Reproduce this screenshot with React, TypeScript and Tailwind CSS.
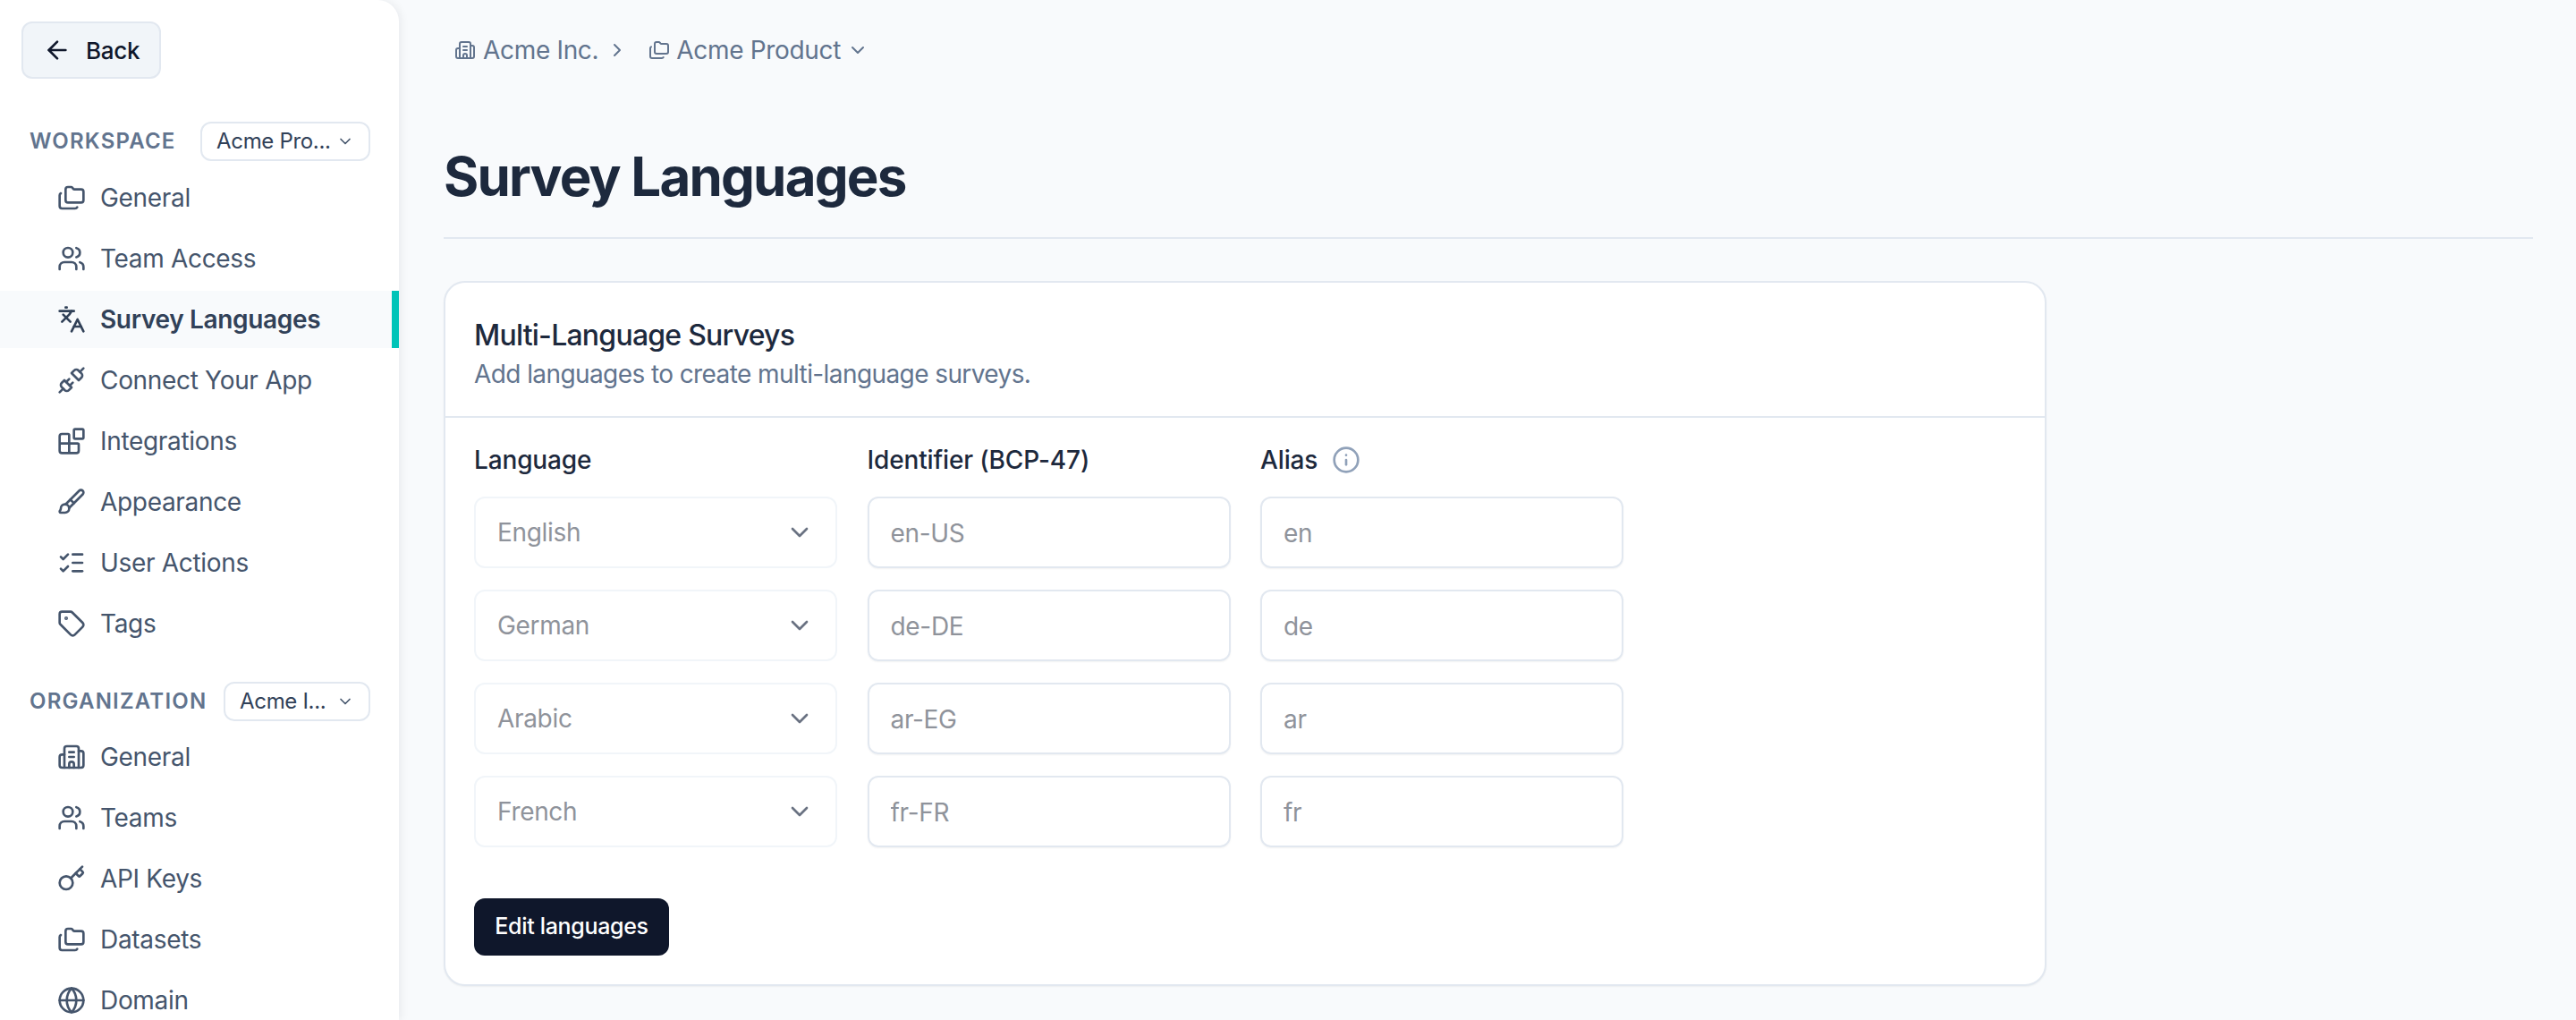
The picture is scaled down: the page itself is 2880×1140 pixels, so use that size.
import {
  ArrowLeft,
  Blocks,
  Brush,
  Building2,
  ChevronDown,
  ChevronRight,
  Folders,
  Globe,
  Info,
  Key,
  Languages,
  ListChecks,
  Tag,
  Unplug,
  Users,
} from "lucide-react"

const workspaceNav = [
  { label: "General", icon: Folders },
  { label: "Team Access", icon: Users },
  { label: "Survey Languages", icon: Languages, active: true },
  { label: "Connect Your App", icon: Unplug },
  { label: "Integrations", icon: Blocks },
  { label: "Appearance", icon: Brush },
  { label: "User Actions", icon: ListChecks },
  { label: "Tags", icon: Tag },
]

const organizationNav = [
  { label: "General", icon: Building2 },
  { label: "Teams", icon: Users },
  { label: "API Keys", icon: Key },
  { label: "Datasets", icon: Folders },
  { label: "Domain", icon: Globe },
]

const languages = [
  { name: "English", code: "en-US", alias: "en" },
  { name: "German", code: "de-DE", alias: "de" },
  { name: "Arabic", code: "ar-EG", alias: "ar" },
  { name: "French", code: "fr-FR", alias: "fr" },
]

function NavItem({ item }: { item: (typeof workspaceNav)[number] }) {
  const Icon = item.icon
  return (
    <div
      className={`relative flex h-[64px] shrink-0 items-center gap-4 pl-16 text-[28px] ${
        item.active ? "bg-slate-50 font-semibold tracking-[-0.012em] text-slate-700" : "text-slate-600"
      }`}
    >
      <Icon className="h-8 w-8 shrink-0" strokeWidth={2} />
      <span>{item.label}</span>
      {item.active && <div className="absolute top-0 right-0 h-full w-2 bg-[#00c4b8]" />}
    </div>
  )
}

function SectionHeader({ title, value, width }: { title: string; value: string; width: string }) {
  return (
    <div className="flex h-[44px] shrink-0 items-center justify-between pr-8 pl-[33px]">
      <span className="text-[24px] font-semibold tracking-[0.05em] text-slate-500">{title}</span>
      <div className={`flex h-[44px] items-center justify-between rounded-xl border-2 border-slate-200 bg-white px-4 text-[24px] text-slate-700 ${width}`}>
        <span>{value}</span>
        <ChevronDown className="h-5 w-5 text-slate-600" />
      </div>
    </div>
  )
}

export default function App() {
  return (
    <div className="flex h-[1140px] overflow-hidden bg-slate-50 font-['Inter',sans-serif] tracking-[-0.02em]">
      {/* Sidebar */}
      <aside className="flex w-[446px] shrink-0 flex-col rounded-tr-3xl bg-white pt-6 shadow-[3px_0_10px_rgba(15,23,42,0.06)]">
        <div className="ml-6 flex h-16 w-[156px] shrink-0 items-center gap-4 rounded-xl border-2 border-slate-200 bg-slate-100 pl-[22px] text-[26px] font-medium text-slate-900">
          <ArrowLeft className="h-8 w-8" />
          <span>Back</span>
        </div>

        <div className="mt-12 shrink-0">
          <SectionHeader title="WORKSPACE" value="Acme Pro..." width="w-[190px]" />
        </div>
        <div className="mt-[9px] flex shrink-0 flex-col gap-1">
          {workspaceNav.map((item) => (
            <NavItem key={item.label} item={item} />
          ))}
        </div>

        <div className="mt-[33px] shrink-0">
          <SectionHeader title="ORGANIZATION" value="Acme I..." width="w-[164px]" />
        </div>
        <div className="mt-2 flex shrink-0 flex-col gap-1">
          {organizationNav.map((item) => (
            <NavItem key={item.label} item={item} />
          ))}
        </div>
      </aside>

      {/* Main */}
      <main className="flex-1 pr-12 pl-[50px]">
        <div className="flex h-[112px] items-center pl-3 text-[28px] text-slate-500">
          <Building2 className="h-6 w-6" />
          <span className="ml-2">Acme Inc.</span>
          <ChevronRight className="ml-[9px] h-6 w-6" />
          <Folders className="ml-[23px] h-6 w-6" />
          <span className="ml-[7px]">Acme Product</span>
          <ChevronDown className="ml-[7px] h-6 w-6" />
        </div>

        <div className="flex h-[155px] items-center border-b-2 border-slate-200 pt-4">
          <h1 className="text-[60px] leading-none font-bold tracking-[-0.03em] text-slate-800">Survey Languages</h1>
        </div>

        <section className="mt-[47px] w-[1792px] rounded-3xl border-2 border-slate-200 bg-white shadow-xs">
          <div className="h-[151px] border-b-2 border-slate-200 px-8 pt-9">
            <h2 className="text-[32px] leading-[46px] font-medium tracking-[-0.024em] text-slate-800">Multi-Language Surveys</h2>
            <p className="text-[28px] leading-[40px] tracking-[-0.021em] text-slate-500">Add languages to create multi-language surveys.</p>
          </div>

          <div className="px-8 pt-[27px] pb-8">
            <div className="grid grid-cols-[406px_406px_406px] gap-x-[33.5px] text-[28px] font-medium tracking-[-0.005em] text-slate-800">
              <span className="leading-[40px]">Language</span>
              <span className="leading-[40px]">Identifier (BCP-47)</span>
              <span className="flex items-center gap-4 leading-[40px]">
                Alias
                <Info className="h-8 w-8 text-slate-400" strokeWidth={2} />
              </span>
            </div>

            <div className="mt-[21px] flex flex-col gap-6">
              {languages.map((lang) => (
                <div key={lang.name} className="grid grid-cols-[406px_406px_406px] gap-x-[33.5px]">
                  <div className="flex h-[80px] items-center justify-between rounded-xl border-2 border-slate-100 px-6 text-[28px]">
                    <span className="text-[#8f939b]">{lang.name}</span>
                    <ChevronDown className="h-8 w-8 text-gray-500" />
                  </div>
                  <input
                    readOnly
                    value={lang.code}
                    className="h-[80px] rounded-xl border-2 border-slate-200 px-6 pt-[2px] text-[28px] text-[#8f939b] shadow-xs outline-none"
                  />
                  <input
                    readOnly
                    value={lang.alias}
                    className="h-[80px] rounded-xl border-2 border-slate-200 px-6 pt-[2px] text-[28px] text-[#8f939b] shadow-xs outline-none"
                  />
                </div>
              ))}
            </div>

            <button className="mt-[57px] h-16 w-[218px] rounded-xl bg-slate-900 text-[25px] font-medium text-white">
              Edit languages
            </button>
          </div>
        </section>
      </main>
    </div>
  )
}
